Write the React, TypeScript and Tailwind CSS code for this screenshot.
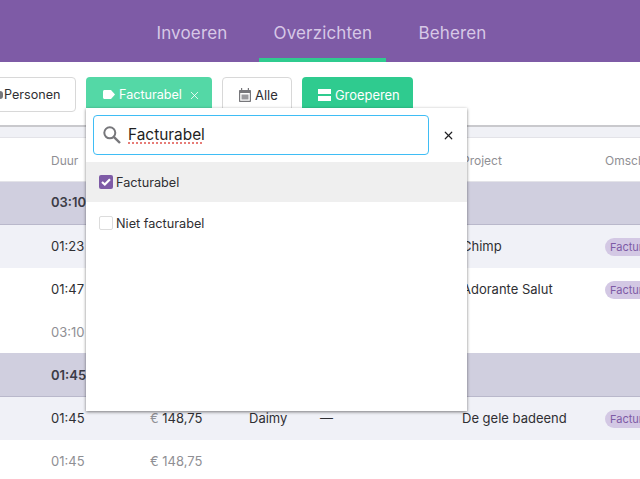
import { X } from 'lucide-react'

const cols = 'grid grid-cols-[51px_99px_99px_71px_142px_143px_1fr] items-center'

interface Row {
  kind: 'group' | 'entry' | 'plain' | 'total'
  height: string
  duur: string
  bedrag?: string
  persoon?: string
  taak?: string
  project?: string
  badge?: boolean
}

const rows: Row[] = [
  { kind: 'group', height: 'h-[43px]', duur: '03:10' },
  { kind: 'entry', height: 'h-[43px]', duur: '01:23', project: 'Chimp', badge: true },
  { kind: 'plain', height: 'h-[43px]', duur: '01:47', project: 'Adorante Salut', badge: true },
  { kind: 'total', height: 'h-[42px] pt-[1px]', duur: '03:10' },
  { kind: 'group', height: 'h-[44px] pt-[2px]', duur: '01:45' },
  { kind: 'entry', height: 'h-[43px]', duur: '01:45', bedrag: '148,75', persoon: 'Daimy', taak: '—', project: 'De gele badeend', badge: true },
  { kind: 'total', height: 'h-[43px]', duur: '01:45', bedrag: '148,75' },
]

function TableRow({ row }: { row: Row }) {
  const bg =
    row.kind === 'group'
      ? 'bg-[#d0cfdf] border-b border-[#b9b8cb] font-semibold text-[#3c3c46]'
      : row.kind === 'entry'
        ? 'bg-[#f0f1f7] text-[#2f2f33]'
        : row.kind === 'total'
          ? 'bg-white text-[#8f8f94]'
          : 'bg-white text-[#2f2f33]'
  return (
    <div className={`${cols} ${row.height} ${bg}`}>
      <div />
      <div>{row.duur}</div>
      <div>
        {row.bedrag && (
          <span>
            <span className="text-[#8f8f94]">€ </span>
            {row.bedrag}
          </span>
        )}
      </div>
      <div>{row.persoon}</div>
      <div>{row.taak}</div>
      <div className="whitespace-nowrap">{row.project}</div>
      <div className="overflow-hidden">
        {row.badge && (
          <span className="inline-block rounded-full bg-[#d3c8e4] pl-[5px] pr-2 h-[18px] leading-[18px] text-[11px] text-[#7e5ba6] whitespace-nowrap">
            Facturabel
          </span>
        )}
      </div>
    </div>
  )
}

export default function App() {
  return (
    <div
      className="relative w-[640px] h-[479px] overflow-hidden bg-white text-[13px]"
      style={{ fontFamily: 'Inter, "Noto Sans", sans-serif' }}
    >
      <header className="h-[62px] bg-[#7e5ba6] flex justify-center gap-[18px] pl-[3px] text-[17px] tracking-[0.15px] text-[#d7c8e6]">
        <a className="px-[14px] pt-[21px]">Invoeren</a>
        <a className="w-[127px] flex justify-center pt-[21px] border-b-4 border-[#2fcb8f]">Overzichten</a>
        <a className="px-[14px] pt-[21px]">Beheren</a>
      </header>

      <div className="h-[65px] flex items-start gap-[10px] pt-[15px] ml-[-24px] border-b-2 border-[#c9c9cd] text-[12.6px]">
        <button className="h-[35px] w-[100px] flex items-center gap-[1px] pl-[24px] rounded border border-[#d8d8d8] text-[#2f2f33]">
          <span className="w-[3px] h-[8px] -ml-[1px] rounded-r-full bg-[#77777b]" />
          <span className="pt-[2px]">Personen</span>
        </button>
        <button className="h-[35px] w-[126px] flex items-center pl-[17px] gap-[4px] rounded bg-[#54d8a6] text-white">
          <svg width="12" height="9" viewBox="0 0 12 9" fill="white">
            <path d="M1.5 0H8L12 4.5L8 9H1.5C.7 9 0 8.3 0 7.5V1.5C0 .7 .7 0 1.5 0Z" />
          </svg>
          <span className="pt-[2px]">Facturabel</span>
          <X size={13} strokeWidth={1.5} className="ml-[2px] mt-[2px]" />
        </button>
        <button className="h-[35px] w-[70px] flex items-center pl-[16px] gap-[4px] rounded border border-[#d8d8d8] text-[13px] text-[#2f2f33]">
          <svg width="12" height="14" viewBox="0 0 12 14" fill="#77777b">
            <path d="M2 0H3.2V2H8.8V0H10V2H11C11.6 2 12 2.4 12 3V13C12 13.6 11.6 14 11 14H1C.4 14 0 13.6 0 13V3C0 2.4 .4 2 1 2H2ZM1.2 5V12.8H10.8V5Z" />
            <path d="M2.5 6.5H9.5V11.5H2.5Z" fill="#9a9a9e" />
          </svg>
          <span className="pt-[2px]">Alle</span>
        </button>
        <button className="h-[35px] w-[111px] flex items-center pl-[16px] gap-[4px] rounded bg-[#2fcb8f] text-[12.9px] text-white">
          <svg width="13" height="12" viewBox="0 0 13 12" fill="white">
            <path d="M0 0H13V5H0ZM0 7H13V12H0Z" />
          </svg>
          <span className="pt-[2px]">Groeperen</span>
        </button>
      </div>

      <div className="h-[11px] bg-[#f0f1f6] border-b border-[#e3e3e8]" />

      <div className={`${cols} h-[44px] pt-[3px] border-b border-[#e3e3e8] text-[12px] text-[#8f8f94]`}>
        <div />
        <div>Duur</div>
        <div />
        <div />
        <div />
        <div>Project</div>
        <div className="whitespace-nowrap">Omschrijving</div>
      </div>

      {rows.map((row, i) => (
        <TableRow key={i} row={row} />
      ))}

      <div className="absolute left-[86px] top-[108px] w-[381px] h-[303px] bg-white shadow-[0_1px_3px_rgba(0,0,0,0.5)]">
        <div className="flex items-center pl-[7px] pt-[7px]">
          <div className="w-[336px] h-[40px] flex items-center gap-[7px] pl-[9px] rounded border border-[#3fbdf5]">
            <svg width="18" height="18" viewBox="0 0 18 18" fill="none" stroke="#77777b">
              <circle cx="6.8" cy="6.8" r="5.5" strokeWidth="2" />
              <path d="M10.8 10.8L17 17" strokeWidth="2.4" />
            </svg>
            <input
              readOnly
              value="Facturabel"
              className="flex-1 outline-none text-[15.4px] text-[#1f1f22] underline decoration-dotted decoration-[#e0564f] underline-offset-2"
            />
          </div>
          <X size={13} strokeWidth={2.2} className="ml-[13px] text-[#1f1f22]" />
        </div>
        <ul className="mt-[7px] text-[12.7px] text-[#2f2f33]">
          <li className="h-[40px] flex items-center gap-[3px] pl-[13px] bg-[#efefef]">
            <span className="w-[14px] h-[14px] rounded-[2px] bg-[#7e5ba6] flex items-center justify-center">
              <svg width="10" height="8" viewBox="0 0 10 8" fill="none" stroke="white" strokeWidth="2.2">
                <path d="M1 4L3.8 6.5L9 1.2" />
              </svg>
            </span>
            <span className="pt-[1px]">Facturabel</span>
          </li>
          <li className="h-[41px] flex items-center gap-[3px] pl-[13px]">
            <span className="w-[14px] h-[14px] rounded-[2px] border border-[#dcdcdc] bg-white" />
            <span className="pt-[2px]">Niet facturabel</span>
          </li>
        </ul>
      </div>
    </div>
  )
}
